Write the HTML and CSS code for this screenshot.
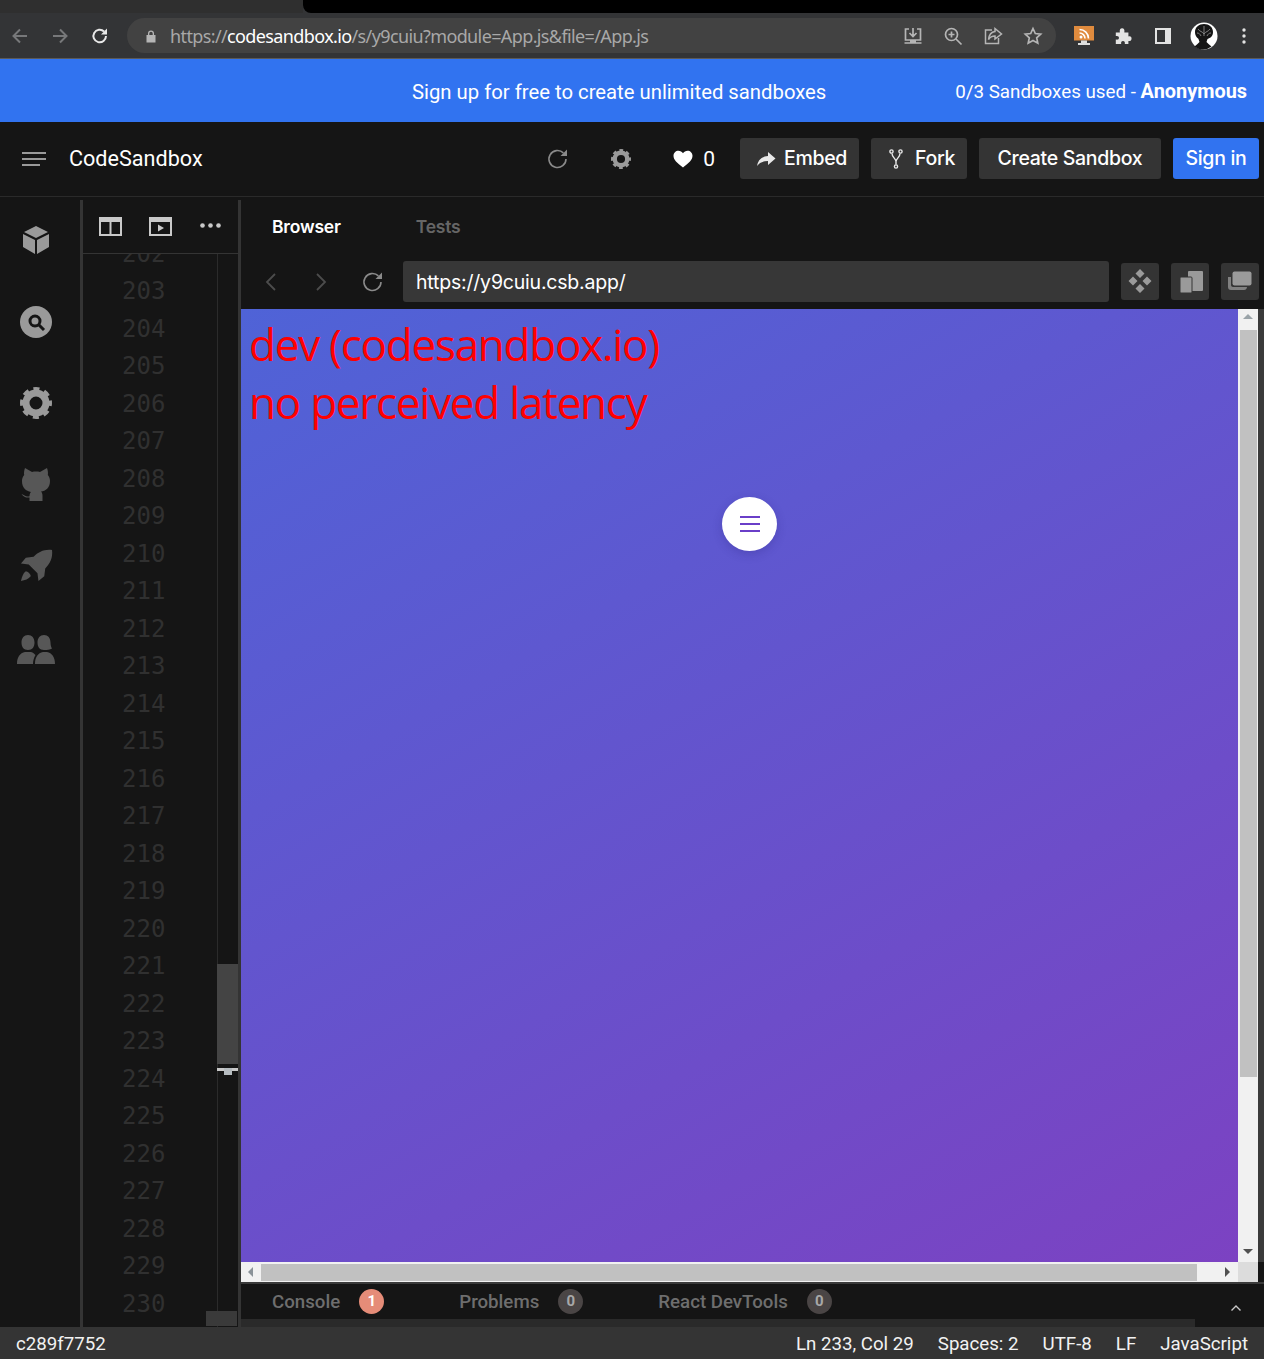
FILE: index.html
```html
<!DOCTYPE html>
<html lang="en">
<head>
    <meta charset="UTF-8">
    <meta name="viewport" content="width=device-width, initial-scale=1.0">
    <title>CodeSandbox</title>
    <link rel="stylesheet" href="styles.css">
</head>
<body>
    <svg class="defs" width="0" height="0">
        <symbol id="gear" viewBox="0 0 32 32">
            <circle cx="16" cy="16" r="10" fill="none" stroke="currentColor" stroke-width="7"/>
            <circle cx="16" cy="16" r="14" fill="none" stroke="currentColor" stroke-width="4" stroke-dasharray="6 4.995" stroke-dashoffset="3"/>
        </symbol>
        <symbol id="reload" viewBox="0 0 24 24">
            <path d="M20 12a8.5 8.5 0 1 1-2.6-6.1" fill="none" stroke="currentColor" stroke-width="1.6"/>
            <path d="M21 2.500v6.500h-6.500z" fill="currentColor"/>
        </symbol>
    </svg>

    <!-- browser chrome -->
    <div class="tabstrip">
        <div class="tab"></div>
        <div class="tabstrip-rest"></div>
    </div>
    <div class="toolbar">
        <svg class="tool-icon dim" viewBox="0 0 20 20"><path d="M17 10H4M10 3.500 3.500 10l6.500 6.500" fill="none" stroke="currentColor" stroke-width="2"/></svg>
        <svg class="tool-icon dim" viewBox="0 0 20 20"><path d="M3 10h13M10 3.500l6.500 6.500-6.500 6.500" fill="none" stroke="currentColor" stroke-width="2"/></svg>
        <svg class="tool-icon light" viewBox="0 0 20 20"><path d="M16 10a6.300 6.300 0 1 1-1.900-4.500" fill="none" stroke="currentColor" stroke-width="2"/><path d="M17 2.500v6h-6z" fill="currentColor"/></svg>
        <div class="omnibox">
            <svg class="lock" viewBox="0 0 12 14"><path d="M3 6V4.500a3 3 0 0 1 6 0V6h1.500v7.500h-9V6zM4.300 6h3.400V4.500a1.700 1.700 0 0 0-3.400 0z" fill="currentColor"/></svg>
            <div class="url"><span class="url-dim">https://</span>codesandbox.io<span class="url-dim">/s/y9cuiu?module=App.js&amp;file=/App.js</span></div>
            <div class="omni-icons">
                <svg viewBox="0 0 20 20"><path d="M6 3H2.500v11h15V3H14M10 2v8M6.500 7l3.500 3.500L13.500 7M1.500 17h17" fill="none" stroke="currentColor" stroke-width="1.700"/><path d="M7 14h6v3H7z" fill="currentColor"/></svg>
                <svg viewBox="0 0 20 20"><circle cx="8.500" cy="8.500" r="6" fill="none" stroke="currentColor" stroke-width="1.700"/><path d="M13 13l5.500 5.500M8.500 5.500v6M5.500 8.500h6" fill="none" stroke="currentColor" stroke-width="1.700"/></svg>
                <svg viewBox="0 0 20 20"><path d="M9 4H2.500v13.500h13V12" fill="none" stroke="currentColor" stroke-width="1.500"/><path d="M12 2.500 18.500 8 12 13v-3c-3 0-5 1-6.500 3.500C6 9 8 6 12 5.500z" fill="none" stroke="currentColor" stroke-width="1.500"/></svg>
                <svg viewBox="0 0 20 20"><path d="M10 2.500l2.300 5 5.400.6-4 3.700 1.100 5.400L10 14.500l-4.800 2.700 1.100-5.400-4-3.700 5.400-.6z" fill="none" stroke="currentColor" stroke-width="1.700"/></svg>
            </div>
        </div>
        <div class="extensions">
            <svg class="ext-rss" viewBox="0 0 22 22"><path d="M1 1h20v14.500H1z" fill="#e08b3e"/><path d="M8 15.500h6V18h3v2H5v-2h3z" fill="#ddd"/><circle cx="8" cy="12" r="1.500" fill="#fff"/><path d="M6.500 8a5.500 5.500 0 0 1 5.500 5.500M6.500 4.500a9 9 0 0 1 9 9" fill="none" stroke="#fff" stroke-width="1.600"/></svg>
            <svg class="ext-puzzle" viewBox="0 0 20 20"><path d="M2 6h4.500C6 3 7 1.500 9 1.500S12 3 11.500 6H16v4.500c3-.5 3.500 1 3.500 2.500S18.500 16 16 15.500V19h-4c.5-2.500-.5-3.500-2-3.500S7.500 16.500 8 19H2v-5c2.500.5 3.500-.5 3.500-2S4.500 9.500 2 10z" fill="currentColor"/></svg>
            <svg class="ext-panel" viewBox="0 0 18 18"><path d="M1 1h16v16H1zM3 3v12h8V3z" fill="currentColor" fill-rule="evenodd"/></svg>
            <svg class="avatar" viewBox="0 0 28 28"><circle cx="14" cy="14" r="13.500" fill="#fff"/><path d="M5 10c0-5 4-8 9-8s9 3 9 8c0 4-2.500 6-5.500 7l-1 3c1.500 1.500 3 3 5 4.500a13.500 13.500 0 0 1-17 0c2-1.500 3.500-3 5-4.500l-1-3C7.500 16 5 14 5 10z" fill="#151515"/><path d="M8 7c2 3 4 2 6 5M20 7c-2 3-4 2-6 5M14 4v10M7 11c2 0 3 1 4 3M21 11c-2 0-3 1-4 3" fill="none" stroke="#8a8a8a" stroke-width=".9"/></svg>
            <svg class="kebab" viewBox="0 0 4 16"><circle cx="2" cy="2" r="1.700" fill="currentColor"/><circle cx="2" cy="8" r="1.700" fill="currentColor"/><circle cx="2" cy="14" r="1.700" fill="currentColor"/></svg>
        </div>
    </div>

    <!-- sign up banner -->
    <div class="banner">
        <div class="banner-text">Sign up for free to create unlimited sandboxes</div>
        <div class="banner-usage">0/3 Sandboxes used - <b>Anonymous</b></div>
    </div>

    <!-- app header -->
    <header class="header">
        <div class="menu-lines"><i></i><i></i><i class="short"></i></div>
        <div class="brand">CodeSandbox</div>
        <div class="header-actions">
            <svg class="head-reload"><use href="#reload"/></svg>
            <svg class="head-gear"><use href="#gear"/></svg>
            <svg class="heart" viewBox="0 0 20 18"><path d="M10 17.500C4 13 .5 9.800.5 5.800.5 2.800 2.800.7 5.400.7 7.300.7 9 1.700 10 3.300 11 1.700 12.700.7 14.600.7c2.600 0 4.900 2.100 4.900 5.100 0 4-3.500 7.200-9.500 11.700z" fill="currentColor"/></svg>
            <span class="like-count">0</span>
            <button class="btn embed">
                <svg viewBox="0 0 20 16"><path d="M12 1l7.500 6.500L12 14v-4C7 10 3.500 11.500 1 15c.8-5.500 4.500-9.500 11-10z" fill="currentColor"/></svg>
                Embed
            </button>
            <button class="btn fork">
                <svg viewBox="0 0 14 20"><circle cx="2.500" cy="2.500" r="1.600" fill="none" stroke="currentColor" stroke-width="1.400"/><circle cx="11.500" cy="2.500" r="1.600" fill="none" stroke="currentColor" stroke-width="1.400"/><circle cx="7" cy="17.500" r="1.600" fill="none" stroke="currentColor" stroke-width="1.400"/><path d="M3 4.500c0 4 4 5 4 8v3M11 4.500c0 4-4 5-4 8" fill="none" stroke="currentColor" stroke-width="1.400"/></svg>
                Fork
            </button>
            <button class="btn create">Create Sandbox</button>
            <button class="btn signin">Sign in</button>
        </div>
    </header>

    <div class="workspace">
        <!-- activity bar -->
        <nav class="activity">
            <div class="activity-item on">
                <svg class="i-box" viewBox="0 0 26 28"><path d="M13 0l12 6-12 6L1 6zM0 8l12 6v14L0 21zM26 8l-12 6v14l12-7z" fill="currentColor"/></svg>
            </div>
            <div class="activity-item on">
                <svg class="i-search" viewBox="0 0 32 32"><circle cx="16" cy="16" r="16" fill="currentColor"/><circle cx="15" cy="15" r="5" fill="none" stroke="#151515" stroke-width="3"/><path d="M19 19l5 5" stroke="#151515" stroke-width="3"/></svg>
            </div>
            <div class="activity-item on">
                <svg class="i-gear"><use href="#gear"/></svg>
            </div>
            <div class="activity-item">
                <svg class="i-github" viewBox="0 0 30 34"><path d="M4 1l7 4c2.500-.6 5.500-.6 8 0l7-4c1 3 1.200 5 .8 7 1.400 1.700 2.200 3.700 2.200 6 0 7-4.500 10-9 10.500 1 1 1.500 2.500 1.500 4.500v5h-13v-3.500C5 31 3 30 .5 27c3 1 4 3 8 2.200 0-1.700.5-3.200 1.500-4.200C5 24 1 21 1 14c0-2.300.8-4.300 2.200-6C2.800 6 3 4 4 1z" fill="currentColor"/></svg>
            </div>
            <div class="activity-item">
                <svg class="i-rocket" viewBox="0 0 34 34"><path d="M33 1c1 8-2 14-7 19l-1 8-6 5-1-8-9-9-8-1 5-6 8-1C19 3 25 0 33 1z" fill="currentColor"/><path d="M6 23c2 0 5 3 5 5-2 3-6 4-10 5 1-4 2-8 5-10z" fill="currentColor"/></svg>
            </div>
            <div class="activity-item">
                <svg class="i-people" viewBox="0 0 38 30"><path d="M11 1c4 0 6.500 3 6.500 7.500S15.500 16 11 16 4.500 13 4.500 8.500 7 1 11 1zM27 1c4 0 6.500 3 6.500 7.500 0 2 .5 4.500 1.500 6-2 1.500-5 1.500-8 1.500-4.500 0-6.500-3-6.500-7.500S23 1 27 1zM0 30c0-7 3-11 8-12h6c2 .5 3.500 2 4.500 3-1.500 2.500-2.500 5.500-2.500 9zM18 30c0-7 3-11 8-12h4c5 1 8 5 8 12z" fill="currentColor"/></svg>
            </div>
        </nav>

        <!-- code editor column -->
        <aside class="editor">
            <div class="editor-tools">
                <svg class="view-icon" viewBox="0 0 23 19"><path d="M0 0h23v19H0zM2 5v12h8.500V5zM12.500 5v12H21V5z" fill="currentColor" fill-rule="evenodd"/></svg>
                <svg class="view-icon" viewBox="0 0 23 19"><path d="M0 0h23v19H0zM2 5v12h19V5z" fill="currentColor" fill-rule="evenodd"/><path d="M9 7.500l6 3.500-6 3.500z" fill="currentColor"/></svg>
                <svg class="dots" viewBox="0 0 21 5"><circle cx="2.500" cy="2.500" r="2.300" fill="currentColor"/><circle cx="10.500" cy="2.500" r="2.300" fill="currentColor"/><circle cx="18.500" cy="2.500" r="2.300" fill="currentColor"/></svg>
            </div>
            <div class="gutter">
                <div class="line-no">202</div>
                <div class="line-no">203</div>
                <div class="line-no">204</div>
                <div class="line-no">205</div>
                <div class="line-no">206</div>
                <div class="line-no">207</div>
                <div class="line-no">208</div>
                <div class="line-no">209</div>
                <div class="line-no">210</div>
                <div class="line-no">211</div>
                <div class="line-no">212</div>
                <div class="line-no">213</div>
                <div class="line-no">214</div>
                <div class="line-no">215</div>
                <div class="line-no">216</div>
                <div class="line-no">217</div>
                <div class="line-no">218</div>
                <div class="line-no">219</div>
                <div class="line-no">220</div>
                <div class="line-no">221</div>
                <div class="line-no">222</div>
                <div class="line-no">223</div>
                <div class="line-no">224</div>
                <div class="line-no">225</div>
                <div class="line-no">226</div>
                <div class="line-no">227</div>
                <div class="line-no">228</div>
                <div class="line-no">229</div>
                <div class="line-no">230</div>
                <div class="ruler"></div>
                <div class="scroll-thumb"></div>
                <div class="scroll-mark"><i></i></div>
                <div class="corner-box"></div>
            </div>
        </aside>

        <!-- browser preview -->
        <main class="preview">
            <div class="preview-tabs">
                <span class="preview-tab active">Browser</span>
                <span class="preview-tab">Tests</span>
            </div>
            <div class="nav-row">
                <svg class="nav-chev" viewBox="0 0 14 20"><path d="M11 2 3 10l8 8" fill="none" stroke="currentColor" stroke-width="1.800"/></svg>
                <svg class="nav-chev" viewBox="0 0 14 20"><path d="M3 2l8 8-8 8" fill="none" stroke="currentColor" stroke-width="1.800"/></svg>
                <svg class="nav-reload"><use href="#reload"/></svg>
                <div class="address">https://y9cuiu.csb.app/</div>
                <div class="view-btn">
                    <svg viewBox="0 0 26 24"><path d="M13 0l4.500 4.500-4.500 4.500-4.500-4.500zM6 7.500l4.500 4.500L6 16.500 1.500 12zM20 7.500l4.500 4.500-4.500 4.500-4.500-4.500zM13 15l4.500 4.500L13 24l-4.500-4.500z" fill="currentColor"/></svg>
                </div>
                <div class="view-btn">
                    <svg viewBox="0 0 26 24"><rect x="11" y="2" width="15" height="20" rx="1" fill="currentColor"/><rect x="3" y="8" width="12" height="16" rx="1" fill="currentColor" stroke="#343434"/></svg>
                </div>
                <div class="view-btn">
                    <svg viewBox="0 0 26 24"><path d="M1 8h3v8c0 1 1 2 2 2h14c0 1.500-1 3-3 3H4c-2 0-3-1-3-3z" fill="currentColor" opacity=".75"/><rect x="5.500" y="2.500" width="19" height="14" rx="2" fill="currentColor"/></svg>
                </div>
            </div>
            <div class="frame">
                <div class="frame-main">
                    <div class="page">
                        <div class="red-line">dev (codesandbox.io)</div>
                        <div class="red-line">no perceived latency</div>
                        <div class="fab"><i></i><i></i><i></i></div>
                    </div>
                    <div class="vbar">
                        <span class="arrow up"></span>
                        <div class="vbar-thumb"></div>
                        <span class="arrow down"></span>
                    </div>
                </div>
                <div class="hbar">
                    <span class="arrow left"></span>
                    <div class="hbar-thumb"></div>
                    <span class="arrow right"></span>
                    <div class="hbar-corner"></div>
                </div>
            </div>
            <div class="console-tabs">
                <span class="console-tab first">Console</span><span class="badge error">1</span>
                <span class="console-tab">Problems</span><span class="badge">0</span>
                <span class="console-tab">React DevTools</span><span class="badge">0</span>
                <svg class="console-chev" viewBox="0 0 12 8"><path d="M1.500 6.500 6 2l4.500 4.500" fill="none" stroke="currentColor" stroke-width="1.400"/></svg>
            </div>
            <div class="console-foot"><div class="console-foot-bar"></div></div>
        </main>
    </div>

    <!-- status bar -->
    <footer class="status">
        <span class="commit">c289f7752</span>
        <div class="status-right">
            <span>Ln 233, Col 29</span>
            <span>Spaces: 2</span>
            <span>UTF-8</span>
            <span>LF</span>
            <span>JavaScript</span>
        </div>
    </footer>
</body>
</html>
```

FILE: styles.css
```css
/* page */
html, body {
    height: 100%;
}

body {
    margin: 0;
    height: 100vh;
    overflow: hidden;
    display: flex;
    flex-direction: column;
    background-color: #151515;
    color: #fff;
    font-family: 'Inter', 'Liberation Sans', sans-serif;
}

.defs {
    position: absolute;
}

svg {
    display: block;
    flex: none;
}

/* browser chrome */
.tabstrip {
    height: 13px;
    display: flex;
    flex: none;
    background-color: #333436;
}

.tab {
    width: 303px;
    background-color: #2f2f2f;
}

.tabstrip-rest {
    flex: 1;
    background-color: #000;
    border-bottom-left-radius: 8px;
}

.toolbar {
    height: 45px;
    flex: none;
    display: flex;
    align-items: center;
    background-color: #333436;
    border-bottom: 1px solid #5a5a5a;
    padding-left: 10px;
}

.tool-icon {
    width: 20px;
    height: 20px;
    margin-right: 20px;
}

.tool-icon.dim {
    color: #77787a;
}

.tool-icon.light {
    color: #e8e8e8;
    margin-right: 17px;
}

.omnibox {
    width: 929px;
    height: 35px;
    display: flex;
    align-items: center;
    background-color: #424242;
    border-radius: 18px;
    padding-left: 18px;
    box-sizing: border-box;
}

.lock {
    width: 12px;
    height: 14px;
    color: #b5b5b5;
    margin-right: 13px;
}

.url {
    font-family: 'Noto Sans', sans-serif;
    font-size: 18px;
    letter-spacing: -0.62px;
    color: #fff;
    white-space: nowrap;
}

.url-dim {
    color: #a8a8a8;
}

.omni-icons {
    margin-left: auto;
    display: flex;
    gap: 20px;
    padding-right: 13px;
    color: #b5b5b5;
}

.omni-icons svg {
    width: 20px;
    height: 20px;
}

.extensions {
    display: flex;
    align-items: center;
    margin-left: 17px;
}

.ext-rss {
    width: 22px;
    height: 22px;
}

.ext-puzzle {
    width: 18px;
    height: 18px;
    margin-left: 19px;
    color: #e3e3e3;
}

.ext-panel {
    width: 18px;
    height: 18px;
    margin-left: 22px;
    color: #e3e3e3;
}

.avatar {
    width: 28px;
    height: 28px;
    margin-left: 18px;
}

.kebab {
    width: 4px;
    height: 16px;
    margin-left: 24px;
    color: #e3e3e3;
}

/* sign up banner */
.banner {
    height: 61px;
    flex: none;
    display: flex;
    align-items: center;
    background-color: #3173f0;
    padding-top: 2px;
    padding-left: 412px;
    padding-right: 17px;
    font-family: 'Roboto', sans-serif;
}

.banner-text {
    font-size: 20.300px;
}

.banner-usage {
    margin-left: auto;
    font-size: 18.800px;
}

.banner-usage b {
    font-size: 19.900px;
    font-weight: 700;
}

/* app header */
.header {
    height: 73px;
    flex: none;
    display: flex;
    align-items: center;
    border-bottom: 1px solid #2a2a2a;
    padding-bottom: 1px;
    padding-left: 22px;
    padding-right: 5px;
}

.menu-lines {
    width: 24px;
    display: flex;
    flex-direction: column;
    gap: 4px;
}

.menu-lines i {
    display: block;
    height: 2px;
    width: 24px;
    background-color: #9a9a9a;
}

.menu-lines i.short {
    width: 18px;
}

.brand {
    margin-left: 23px;
    font-family: 'Roboto', sans-serif;
    font-size: 21.600px;
}

.header-actions {
    margin-left: auto;
    display: flex;
    align-items: center;
}

.head-reload {
    width: 24px;
    height: 24px;
    margin-left: 1px;
    color: #8a8a8a;
}

.head-gear {
    width: 20px;
    height: 20px;
    margin-left: 41px;
    color: #9a9a9a;
}

.heart {
    width: 20px;
    height: 18px;
    margin-left: 42px;
    color: #fff;
}

.like-count {
    font-family: 'Roboto', sans-serif;
    font-size: 21px;
    margin-left: 10px;
    margin-right: 25px;
}

.btn {
    height: 41px;
    display: flex;
    align-items: center;
    justify-content: center;
    gap: 8px;
    margin-left: 12px;
    padding: 0 0 2px;
    border: none;
    border-radius: 3px;
    background-color: #343434;
    color: #fff;
    font-family: 'Inter', sans-serif;
    font-size: 19.500px;
    font-weight: 500;
    letter-spacing: -0.3px;
}

.btn svg {
    color: #e8e8e8;
}

.embed {
    width: 119px;
    margin-left: 0;
    padding-left: 4px;
}

.embed svg {
    width: 20px;
    height: 16px;
    margin-top: 2px;
}

.fork {
    width: 96px;
    gap: 12px;
    padding-left: 6px;
}

.fork svg {
    width: 14px;
    height: 20px;
    margin-top: 2px;
}

.create {
    width: 182px;
}

.signin {
    width: 86px;
    background-color: #3173f0;
}

/* workspace */
.workspace {
    flex: 1;
    min-height: 0;
    display: flex;
}

.activity {
    width: 80px;
    flex: none;
    padding-top: 2px;
    box-sizing: border-box;
}

.activity-item {
    height: 81.500px;
    display: flex;
    align-items: center;
    justify-content: center;
    color: #575757;
    padding-right: 8px;
    box-sizing: border-box;
}

.activity-item.on {
    color: #9a9a9a;
}

.i-box {
    width: 26px;
    height: 28px;
}

.i-search {
    width: 32px;
    height: 32px;
    margin-top: 1px;
}

.i-gear {
    width: 32px;
    height: 32px;
}

.i-github {
    width: 30px;
    height: 34px;
}

.i-rocket {
    width: 33px;
    height: 33px;
}

.i-people {
    width: 38px;
    height: 30px;
    margin-top: 3px;
}

/* code editor column */
.editor {
    width: 155px;
    flex: none;
    margin-top: 3px;
    border-left: 3px solid #343434;
    border-right: 3px solid #343434;
    display: flex;
    flex-direction: column;
}

.editor-tools {
    height: 54px;
    flex: none;
    box-sizing: border-box;
    border-bottom: 1px solid #343434;
    display: flex;
    align-items: center;
    padding-left: 16px;
    padding-bottom: 1px;
    color: #c9c9c9;
}

.view-icon {
    width: 23px;
    height: 19px;
    margin-right: 27px;
}

.dots {
    width: 21px;
    height: 5px;
    margin-left: 1px;
    margin-bottom: 1px;
}

.gutter {
    flex: 1;
    min-height: 0;
    position: relative;
    overflow: hidden;
    display: flex;
    flex-direction: column;
    justify-content: flex-end;
    padding-bottom: 4px;
}

.line-no {
    flex: none;
    height: 37.500px;
    line-height: 37.500px;
    padding-left: 39px;
    font-family: 'DejaVu Sans Mono', monospace;
    font-size: 24px;
    color: #303030;
}

.ruler {
    position: absolute;
    left: 134px;
    top: 0;
    bottom: 0;
    width: 1px;
    background-color: #2b2b2b;
}

.scroll-thumb {
    position: absolute;
    left: 134px;
    top: 710px;
    width: 21px;
    height: 100px;
    background-color: #444;
}

.scroll-mark {
    position: absolute;
    left: 134px;
    top: 814px;
    width: 21px;
    height: 3px;
    background-color: #c8c8c8;
}

.scroll-mark i {
    display: block;
    width: 8px;
    height: 7px;
    margin-left: 7px;
    background-color: #b6bcc0;
}

.corner-box {
    position: absolute;
    left: 123px;
    top: 1057px;
    width: 31px;
    height: 15px;
    background-color: #3a3a3a;
}

/* browser preview */
.preview {
    flex: 1;
    min-width: 0;
    display: flex;
    flex-direction: column;
}

.preview-tabs {
    height: 59px;
    flex: none;
    display: flex;
    align-items: center;
    padding-left: 31px;
    font-size: 17.500px;
    font-weight: 600;
    letter-spacing: -0.2px;
}

.preview-tab {
    color: #666;
    margin-right: 75px;
}

.preview-tab.active {
    color: #fff;
}

.nav-row {
    height: 53px;
    flex: none;
    display: flex;
    align-items: center;
    padding-left: 23px;
    padding-bottom: 3px;
    box-sizing: border-box;
}

.nav-chev {
    width: 14px;
    height: 20px;
    color: #4c4c4c;
    margin-top: 2px;
    margin-right: 36px;
}

.nav-reload {
    width: 24px;
    height: 24px;
    margin-top: 2px;
    margin-left: -3px;
    color: #8a8a8a;
}

.address {
    width: 706px;
    height: 41px;
    line-height: 43px;
    margin-left: 18px;
    padding-left: 13px;
    box-sizing: border-box;
    background-color: #373737;
    border-radius: 3px;
    color: #fff;
    font-family: 'Inter', sans-serif;
    font-size: 19.500px;
    letter-spacing: -0.2px;
}

.view-btn {
    width: 38px;
    height: 37px;
    margin-left: 12px;
    background-color: #343434;
    border-radius: 3px;
    display: flex;
    align-items: center;
    justify-content: center;
    color: #9a9a9a;
}

.view-btn svg {
    width: 26px;
    height: 24px;
}

/* preview frame */
.frame {
    height: 973px;
    flex: none;
    display: flex;
    flex-direction: column;
}

.frame-main {
    flex: 1;
    min-height: 0;
    display: flex;
    background-color: #3a3a3a;
    padding-right: 6px;
}

.page {
    flex: 1;
    position: relative;
    padding: 6px 8px;
    background: linear-gradient(150deg, #4f63d7, #7c42c2);
}

.red-line {
    height: 58px;
    line-height: 58px;
    font-family: 'Open Sans', sans-serif;
    font-size: 44px;
    letter-spacing: -1.25px;
    color: #ff0000;
    white-space: nowrap;
}

.fab {
    position: absolute;
    left: 481px;
    top: 188px;
    width: 55px;
    height: 54px;
    border-radius: 50%;
    background-color: #fff;
    box-shadow: 0 3px 10px rgba(40, 30, 120, 0.25);
    display: flex;
    flex-direction: column;
    align-items: center;
    justify-content: center;
    gap: 5px;
}

.fab i {
    display: block;
    width: 20px;
    height: 2px;
    background-color: #6a3fc8;
}

.vbar {
    width: 20px;
    flex: none;
    background-color: #f1f1f1;
    display: flex;
    flex-direction: column;
    align-items: center;
}

.vbar-thumb {
    width: 17px;
    height: 747px;
    margin-top: 11px;
    background-color: #c1c1c1;
}

.arrow {
    display: block;
    width: 0;
    height: 0;
    border: 5px solid transparent;
}

.arrow.up {
    margin-top: 5px;
    border-top: none;
    border-bottom-color: #9aa3a8;
}

.arrow.down {
    margin-top: auto;
    margin-bottom: 8px;
    border-bottom: none;
    border-top-color: #505050;
}

.hbar {
    height: 20px;
    flex: none;
    display: flex;
    align-items: center;
    background-color: #f1f1f1;
    padding-left: 7px;
    margin-right: 6px;
}

.hbar-thumb {
    width: 936px;
    height: 17px;
    margin-left: 8px;
    background-color: #c1c1c1;
}

.arrow.left {
    border-left: none;
    border-right-color: #8a9298;
}

.arrow.right {
    margin-left: 28px;
    border-right: none;
    border-left-color: #505050;
}

.hbar-corner {
    width: 20px;
    height: 20px;
    margin-left: auto;
    background-color: #dcdcdc;
}

/* console tabs */
.console-tabs {
    height: 37px;
    flex: none;
    box-sizing: border-box;
    border-top: 2px solid #3a3a3a;
    display: flex;
    align-items: center;
    padding-left: 31px;
    font-family: 'Roboto', sans-serif;
    color: #6e6e6e;
}

.console-tab {
    font-size: 18.700px;
    font-weight: 500;
    margin-left: 75px;
}

.console-tab.first {
    margin-left: 0;
}

.badge {
    width: 25px;
    height: 25px;
    line-height: 25px;
    margin-left: 19px;
    border-radius: 50%;
    background-color: #4a4545;
    color: #a8a8a8;
    text-align: center;
    font-size: 15px;
    font-weight: 700;
}

.badge.error {
    background-color: #e58c78;
    color: #fff;
}

.console-chev {
    width: 12px;
    height: 8px;
    margin-left: auto;
    margin-right: 22px;
    margin-top: 12px;
    color: #c9c9c9;
}

.console-foot {
    height: 8px;
    flex: none;
}

.console-foot-bar {
    height: 8px;
    width: 954px;
    background-color: #2a2a2a;
}

/* status bar */
.status {
    height: 31px;
    flex: none;
    display: flex;
    align-items: center;
    justify-content: space-between;
    background-color: #343434;
    padding: 1px 16px 0;
    font-family: 'Roboto', sans-serif;
    font-size: 18.700px;
    color: #f2f2f2;
}

.status-right {
    display: flex;
    gap: 24px;
}
```
